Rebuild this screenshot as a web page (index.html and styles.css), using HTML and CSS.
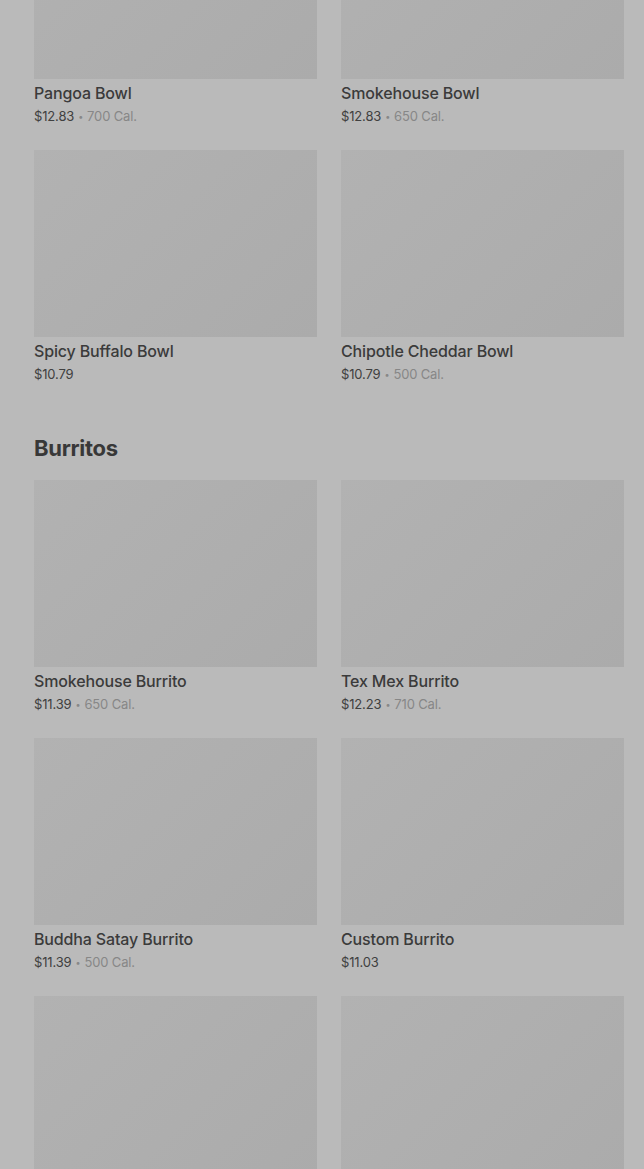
FILE: index.html
```html
<!DOCTYPE html>
<html lang="en">

<head>
    <meta charset="UTF-8">
    <meta name="viewport" content="width=device-width, initial-scale=1.0">
    <title>Menu</title>
    <link rel="stylesheet" href="styles.css">
</head>

<body>
    <div class="menu">
        <div class="grid">
            <div class="card">
                <div class="pic"></div>
                <div class="name">Pangoa Bowl</div>
                <div class="meta">$12.83<span class="dot">•</span><span class="cal">700 Cal.</span></div>
            </div>
            <div class="card">
                <div class="pic"></div>
                <div class="name">Smokehouse Bowl</div>
                <div class="meta">$12.83<span class="dot">•</span><span class="cal">650 Cal.</span></div>
            </div>
            <div class="card">
                <div class="pic"></div>
                <div class="name">Spicy Buffalo Bowl</div>
                <div class="meta">$10.79</div>
            </div>
            <div class="card">
                <div class="pic"></div>
                <div class="name">Chipotle Cheddar Bowl</div>
                <div class="meta">$10.79<span class="dot">•</span><span class="cal">500 Cal.</span></div>
            </div>
        </div>

        <h2 class="section">Burritos</h2>
        <div class="grid">
            <div class="card">
                <div class="pic"></div>
                <div class="name">Smokehouse Burrito</div>
                <div class="meta">$11.39<span class="dot">•</span><span class="cal">650 Cal.</span></div>
            </div>
            <div class="card">
                <div class="pic"></div>
                <div class="name">Tex Mex Burrito</div>
                <div class="meta">$12.23<span class="dot">•</span><span class="cal">710 Cal.</span></div>
            </div>
            <div class="card">
                <div class="pic"></div>
                <div class="name">Buddha Satay Burrito</div>
                <div class="meta">$11.39<span class="dot">•</span><span class="cal">500 Cal.</span></div>
            </div>
            <div class="card">
                <div class="pic"></div>
                <div class="name">Custom Burrito</div>
                <div class="meta">$11.03</div>
            </div>
            <div class="card">
                <div class="pic"></div>
            </div>
            <div class="card">
                <div class="pic"></div>
            </div>
        </div>
    </div>
</body>

</html>
```

FILE: styles.css
```css
* {
    margin: 0;
    padding: 0;
    box-sizing: border-box;
}

body {
    background-color: #bababa;
    font-family: Inter, "Noto Sans", sans-serif;
    color: #3a3a3a;
    overflow: hidden;
    height: 1169px;
}

/* page is scrolled: the first row of pictures is cut off at the top */
.menu {
    margin-top: -108px;
    padding: 0 20px 0 34px;
}

.grid {
    display: grid;
    grid-template-columns: 1fr 1fr;
    column-gap: 24px;
    row-gap: 25px;
}

.pic {
    height: 187px;
    background: linear-gradient(135deg, #b2b2b2, #ababab);
}

.name {
    margin-top: 4px;
    font-size: 16px;
    line-height: 20px;
    font-weight: 500;
    letter-spacing: -0.15px;
    color: #3b3b3b;
}

.meta {
    margin-top: 4px;
    height: 18px;
    font-size: 13px;
    line-height: 18px;
    letter-spacing: -0.15px;
    color: #404040;
}

.dot {
    margin: 0 4px;
    font-size: 9px;
    line-height: 0;
    vertical-align: 1px;
    color: #878787;
}

.cal {
    color: #878787;
}

.section {
    margin: 49px 0 16px;
    font-size: 22px;
    line-height: 32px;
    font-weight: 700;
    letter-spacing: -0.3px;
    color: #383838;
}
```
